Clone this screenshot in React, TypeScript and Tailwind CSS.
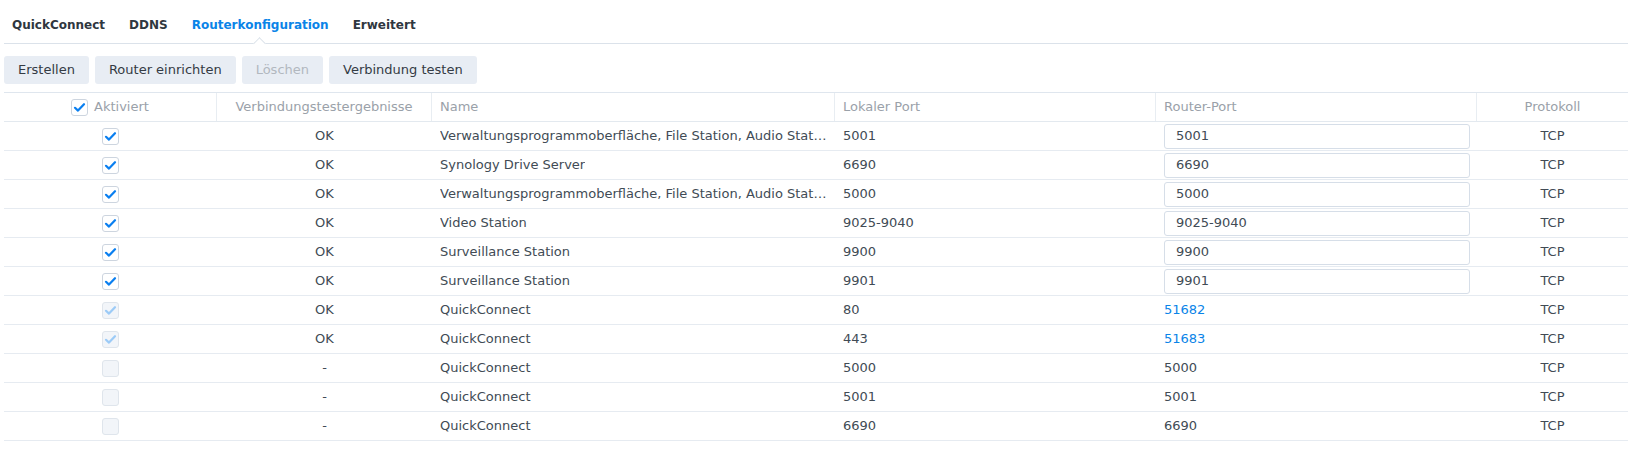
import React from 'react';

type Row = {
  checked: 'on' | 'locked' | 'off';
  result: string;
  name: string;
  local: string;
  router: string;
  kind: 'input' | 'link' | 'text';
};

const rows: Row[] = [
  { checked: 'on', result: 'OK', name: 'Verwaltungsprogrammoberfläche, File Station, Audio Station, Download Station', local: '5001', router: '5001', kind: 'input' },
  { checked: 'on', result: 'OK', name: 'Synology Drive Server', local: '6690', router: '6690', kind: 'input' },
  { checked: 'on', result: 'OK', name: 'Verwaltungsprogrammoberfläche, File Station, Audio Station, Download Station', local: '5000', router: '5000', kind: 'input' },
  { checked: 'on', result: 'OK', name: 'Video Station', local: '9025-9040', router: '9025-9040', kind: 'input' },
  { checked: 'on', result: 'OK', name: 'Surveillance Station', local: '9900', router: '9900', kind: 'input' },
  { checked: 'on', result: 'OK', name: 'Surveillance Station', local: '9901', router: '9901', kind: 'input' },
  { checked: 'locked', result: 'OK', name: 'QuickConnect', local: '80', router: '51682', kind: 'link' },
  { checked: 'locked', result: 'OK', name: 'QuickConnect', local: '443', router: '51683', kind: 'link' },
  { checked: 'off', result: '-', name: 'QuickConnect', local: '5000', router: '5000', kind: 'text' },
  { checked: 'off', result: '-', name: 'QuickConnect', local: '5001', router: '5001', kind: 'text' },
  { checked: 'off', result: '-', name: 'QuickConnect', local: '6690', router: '6690', kind: 'text' },
];

const tabs = ['QuickConnect', 'DDNS', 'Routerkonfiguration', 'Erweitert'];

function Check({ state }: { state: 'on' | 'locked' | 'off' }) {
  const box =
    state === 'on'
      ? 'bg-white border-[#cdd5df]'
      : 'bg-[#f2f5f9] border-[#dfe5ec]';
  return (
    <span className={`w-[17px] h-[17px] rounded-[3px] border flex items-center justify-center ${box}`}>
      {state !== 'off' && (
        <svg width="13" height="13" viewBox="0 0 13 13" fill="none">
          <path
            d="M2 6.8 L5 9.6 L11 3.2"
            stroke={state === 'on' ? '#0a7ff0' : '#9ccbf7'}
            strokeWidth="2.2"
            strokeLinecap="round"
            strokeLinejoin="round"
          />
        </svg>
      )}
    </span>
  );
}

const cols = 'grid grid-cols-[213px_215px_403px_321px_321px_1fr]';

export default function App() {
  return (
    <div className="w-[1632px] h-[461px] bg-white px-[4px] text-[13px] text-[#414b55] font-['DejaVu_Sans',sans-serif] overflow-hidden">
      {/* Tabs */}
      <div className="relative h-[44px] border-b border-[#dbe2ea] flex items-center gap-[24px] px-[8px] pt-[7px] text-[12px]">
        {tabs.map((t) => (
          <span
            key={t}
            className={`font-bold ${t === 'Routerkonfiguration' ? 'text-[#0a84e8]' : 'text-[#2f3740]'}`}
          >
            {t}
          </span>
        ))}
        <span className="absolute left-[251px] bottom-[-5px] w-[9px] h-[9px] rotate-45 bg-white border-l border-t border-[#dbe2ea]" />
      </div>

      {/* Toolbar */}
      <div className="flex gap-[6px] mt-[12px] h-[28px]">
        <button className="px-[14px] rounded-[3px] bg-[#e8edf4] text-[#343b44]">Erstellen</button>
        <button className="px-[14px] rounded-[3px] bg-[#e8edf4] text-[#343b44]">Router einrichten</button>
        <button className="px-[14px] min-w-[81px] rounded-[3px] bg-[#e8edf4] text-[#b2b8bf]">Löschen</button>
        <button className="px-[14px] rounded-[3px] bg-[#e8edf4] text-[#343b44]">Verbindung testen</button>
      </div>

      {/* Table */}
      <div className="mt-[8px] border-t border-[#dfe6ee]">
        <div className={`${cols} h-[29px] border-b border-[#e3e9ef] text-[#9aa1a9]`}>
          <div className="flex items-center justify-center gap-[6px] border-r border-[#e8edf2]">
            <Check state="on" />
            <span>Aktiviert</span>
          </div>
          <div className="flex items-center justify-center border-r border-[#e8edf2]">Verbindungstestergebnisse</div>
          <div className="flex items-center px-[8px] border-r border-[#e8edf2]">Name</div>
          <div className="flex items-center px-[8px] border-r border-[#e8edf2]">Lokaler Port</div>
          <div className="flex items-center px-[8px] border-r border-[#e8edf2]">Router-Port</div>
          <div className="flex items-center justify-center">Protokoll</div>
        </div>
        {rows.map((r, i) => (
          <div key={i} className={`${cols} h-[29px] border-b border-[#e6ebf1]`}>
            <div className="flex items-center justify-center">
              <Check state={r.checked} />
            </div>
            <div className="flex items-center justify-center">{r.result}</div>
            <div className="flex items-center px-[8px] min-w-0">
              <span className="truncate">{r.name}</span>
            </div>
            <div className="flex items-center px-[8px]">{r.local}</div>
            <div className="flex items-center pl-[8px] pr-[7px]">
              {r.kind === 'input' ? (
                <div className="w-full h-[25px] border border-[#d6dee8] rounded-[3px] flex items-center px-[11px]">
                  {r.router}
                </div>
              ) : r.kind === 'link' ? (
                <span className="text-[#0a84e8]">{r.router}</span>
              ) : (
                <span>{r.router}</span>
              )}
            </div>
            <div className="flex items-center justify-center">TCP</div>
          </div>
        ))}
      </div>
    </div>
  );
}
